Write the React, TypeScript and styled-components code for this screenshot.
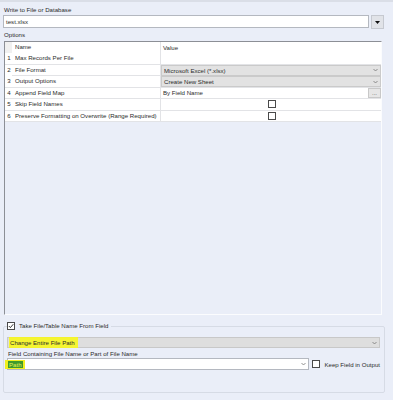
import React from 'react';
import styled, { createGlobalStyle } from 'styled-components';

const GlobalStyle = createGlobalStyle`
  html, body {
    margin: 0;
    padding: 0;
    background: #eaeef8;
  }
  body {
    font-family: "Liberation Sans", Arial, sans-serif;
  }
`;

const Page = styled.div`
  width: 393px;
  height: 400px;
  box-sizing: border-box;
  background: #eaeef8;
  border-top: 2px solid #dadee7;
  font-size: 6.1px;
  color: #2b2b2b;
  display: flex;
  flex-direction: column;
  overflow: hidden;
`;

const FieldLabel = styled.div<{ $top: number }>`
  margin-top: ${p => p.$top}px;
  padding-left: 4px;
  height: 9px;
  line-height: 9px;
  white-space: nowrap;
`;

const PathRow = styled.div`
  display: flex;
  gap: 2px;
  margin-top: 1px;
  padding: 0 9px 0 3px;
  height: 14px;
`;

const TextBox = styled.div`
  flex: 1;
  height: 13px;
  box-sizing: border-box;
  background: #fff;
  border: 1px solid #b4b8c0;
  padding-left: 2px;
  line-height: 11px;
`;

const DropButton = styled.div`
  width: 13px;
  height: 14px;
  box-sizing: border-box;
  background: #e1e3e8;
  border: 1px solid #c6c9d0;
  display: flex;
  align-items: center;
  justify-content: center;
`;

const Grid = styled.div`
  margin: 2px 11px 0 4px;
  height: 274px;
  box-sizing: border-box;
  border-top: 1px solid #8c8f96;
  border-left: 1px solid #8c8f96;
  border-right: 1px solid #fbfcfe;
  border-bottom: 1px solid #fbfcfe;
  background: #eaeef8;
`;

const Row = styled.div<{ $header?: boolean }>`
  display: grid;
  grid-template-columns: 7px 149px 1fr;
  height: ${p => (p.$header ? 11 : 11.5)}px;
  box-sizing: border-box;
  background: #fff;
  border-bottom: ${p => (p.$header ? 'none' : '1px solid #e2e3e6')};
  line-height: 10px;
`;

const NumCell = styled.div<{ $header?: boolean }>`
  background: ${p => (p.$header ? '#f0f0f0' : '#fff')};
  text-align: center;
  padding-left: 1px;
`;

const NameCell = styled.div`
  padding-left: 3px;
  border-right: 1px solid #e2e3e6;
  white-space: nowrap;
  overflow: hidden;
`;

const ValueCell = styled.div<{ $combo?: boolean }>`
  display: flex;
  align-items: center;
  box-sizing: border-box;
  padding-left: 2px;
  background: ${p => (p.$combo ? '#e2e2e2' : '#fff')};
  border: ${p => (p.$combo ? '1px solid #cacaca' : 'none')};
  white-space: nowrap;
`;

const CellText = styled.span`
  flex: 1;
  line-height: 9px;
`;

const Chevron = styled.svg`
  width: 5px;
  height: 4px;
  margin-right: 2px;
  flex-shrink: 0;
`;

const EllipsisButton = styled.div`
  width: 13px;
  height: 100%;
  box-sizing: border-box;
  background: #e6e6e6;
  border: 1px solid #c8c8c8;
  text-align: center;
  line-height: 7px;
  color: #555;
`;

const CenterBox = styled.div`
  flex: 1;
  display: flex;
  justify-content: center;
  align-items: center;
`;

const Check = styled.div<{ $gap?: number }>`
  width: 8px;
  height: 8px;
  margin-left: ${p => p.$gap ?? 0}px;
  box-sizing: border-box;
  border: 1px solid #4a4a4a;
  background: #fff;
  display: flex;
  align-items: center;
  justify-content: center;
  flex-shrink: 0;
`;

const Group = styled.fieldset`
  flex: 1;
  margin: 7px 8px 7px 3px;
  padding: 0 4px 0 3px;
  border: 1px solid #d6dbe5;
  border-radius: 2px;
  min-width: 0;
  display: flex;
  flex-direction: column;
`;

const Legend = styled.legend`
  display: flex;
  align-items: center;
  gap: 4px;
  padding: 0 3px 0 0;
  height: 8px;
  line-height: 8px;
`;

const Combo = styled.div`
  margin-top: 7px;
  height: 11px;
  box-sizing: border-box;
  background: #dedede;
  border: 1px solid #c8c8c8;
  display: flex;
  align-items: center;
  padding-left: 1px;
`;

const Marker = styled.span`
  background: rgba(246, 246, 40, 0.95);
  padding: 2px 3px 2px 1px;
  margin: -2px 0;
  line-height: 9px;
`;

const SubLabel = styled.div`
  margin-top: 1px;
  padding-left: 1px;
  height: 9px;
  line-height: 9px;
  white-space: nowrap;
`;

const FieldRow = styled.div`
  display: flex;
  align-items: center;
  height: 12px;
`;

const FieldBox = styled.div`
  width: 303px;
  height: 12px;
  box-sizing: border-box;
  background: #fff;
  border: 1px solid #b4b8c0;
  display: flex;
  align-items: center;
`;

const PathMark = styled.span`
  background: #f0f020;
  padding: 1px 2px 1px 3px;
  margin-left: -3px;
  line-height: 8px;
`;

const Selected = styled.span`
  background: #3f9a2c;
  color: #e6f25a;
  padding: 0 1px;
`;

const KeepLabel = styled.span`
  margin-left: 4px;
  white-space: nowrap;
`;

const Down = () => (
  <Chevron viewBox="0 0 5 4">
    <path d="M0.5 1 L2.5 3 L4.5 1" fill="none" stroke="#777" strokeWidth="0.8" />
  </Chevron>
);

const Tick = () => (
  <svg width="6" height="6" viewBox="0 0 6 6">
    <path d="M0.8 3 L2.4 4.6 L5.3 1.2" fill="none" stroke="#222" strokeWidth="0.9" />
  </svg>
);

type Option = { name: string; kind: 'text' | 'combo' | 'browse' | 'check'; value?: string };

const options: Option[] = [
  { name: 'Max Records Per File', kind: 'text' },
  { name: 'File Format', kind: 'combo', value: 'Microsoft Excel (*.xlsx)' },
  { name: 'Output Options', kind: 'combo', value: 'Create New Sheet' },
  { name: 'Append Field Map', kind: 'browse', value: 'By Field Name' },
  { name: 'Skip Field Names', kind: 'check' },
  { name: 'Preserve Formatting on Overwrite (Range Required)', kind: 'check' },
];

const OptionValue: React.FC<{ opt: Option }> = ({ opt }) => {
  if (opt.kind === 'combo') {
    return (
      <ValueCell $combo>
        <CellText>{opt.value}</CellText>
        <Down />
      </ValueCell>
    );
  }
  if (opt.kind === 'browse') {
    return (
      <ValueCell>
        <CellText>{opt.value}</CellText>
        <EllipsisButton>...</EllipsisButton>
      </ValueCell>
    );
  }
  if (opt.kind === 'check') {
    return (
      <ValueCell>
        <CenterBox>
          <Check />
        </CenterBox>
      </ValueCell>
    );
  }
  return <ValueCell />;
};

const App: React.FC = () => {
  return (
    <Page>
      <GlobalStyle />
      <FieldLabel $top={3}>Write to File or Database</FieldLabel>
      <PathRow>
        <TextBox>test.xlsx</TextBox>
        <DropButton>
          <svg width="5" height="3" viewBox="0 0 5 3">
            <path d="M0 0 L5 0 L2.5 3 Z" fill="#111" />
          </svg>
        </DropButton>
      </PathRow>
      <FieldLabel $top={1}>Options</FieldLabel>
      <Grid>
        <Row $header>
          <NumCell $header />
          <NameCell>Name</NameCell>
          <ValueCell>Value</ValueCell>
        </Row>
        {options.map((opt, i) => (
          <Row key={opt.name}>
            <NumCell>{i + 1}</NumCell>
            <NameCell>{opt.name}</NameCell>
            <OptionValue opt={opt} />
          </Row>
        ))}
      </Grid>
      <Group>
        <Legend>
          <Check>
            <Tick />
          </Check>
          Take File/Table Name From Field
        </Legend>
        <Combo>
          <CellText>
            <Marker>Change Entire File Path</Marker>
          </CellText>
          <Down />
        </Combo>
        <SubLabel>Field Containing File Name or Part of File Name</SubLabel>
        <FieldRow>
          <FieldBox>
            <CellText>
              <PathMark>
                <Selected>Path</Selected>
              </PathMark>
            </CellText>
            <Down />
          </FieldBox>
          <Check $gap={3} />
          <KeepLabel>Keep Field in Output</KeepLabel>
        </FieldRow>
      </Group>
    </Page>
  );
};

export default App;
